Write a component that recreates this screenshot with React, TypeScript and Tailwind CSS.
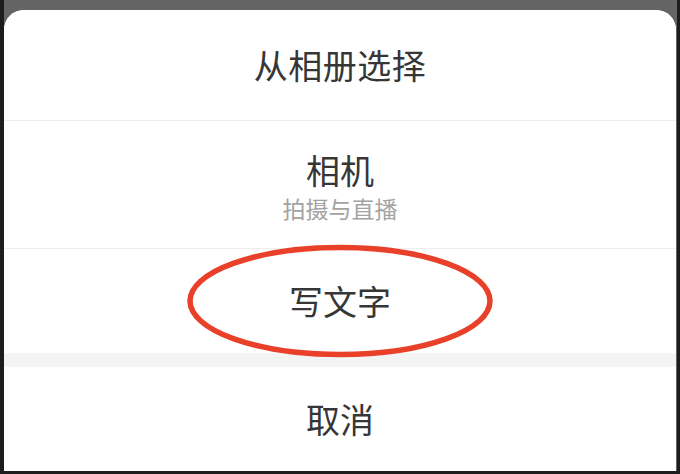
// Action sheet with a hand-drawn highlight round one option
const font = { fontFamily: '"Noto Sans CJK SC", "Noto Sans", sans-serif' };

function Row({ children, className }: { children: React.ReactNode; className?: string }) {
  return (
    <div className={"flex flex-col items-center justify-center bg-white " + (className ?? "")}>
      {children}
    </div>
  );
}

export default function App() {
  return (
    <div className="w-[680px] h-[474px] bg-[#1d1d1d] pl-[4px] pr-[3px] pb-[3px] flex flex-col" style={font}>
      <div className="flex-1 bg-[#646464] pt-[10px] flex flex-col">
        <div className="flex-1 mr-[1px] bg-white rounded-t-[20px] flex flex-col overflow-hidden text-[#363636]">
          <Row className="h-[111px] border-b border-[#ededed]">
            <span className="text-[34px] leading-[40px] tracking-[0.5px]">从相册选择</span>
          </Row>

          <Row className="h-[128px] border-b border-[#ededed] pt-[4px]">
            <span className="text-[34px] leading-[36px]">相机</span>
            <span className="text-[23px] leading-[28px] text-[#a3a3a3] mt-[6px]">拍摄与直播</span>
          </Row>

          <Row className="h-[104px] relative">
            <span className="text-[34px] leading-[40px]">写文字</span>
            <svg className="absolute left-[179px] top-[-6px]" width="314" height="118" viewBox="0 0 314 118">
              <ellipse cx="157" cy="58" rx="150" ry="53.5" fill="none" stroke="#e94129" strokeWidth="5.5" />
            </svg>
          </Row>

          <div className="h-[14px] bg-[#f4f4f4]" />

          <Row className="flex-1">
            <span className="text-[34px] leading-[40px]">取消</span>
          </Row>
        </div>
      </div>
    </div>
  );
}
